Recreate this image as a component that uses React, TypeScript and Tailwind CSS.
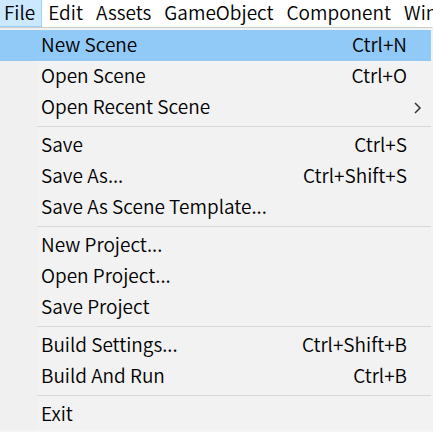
import { Fragment } from "react";

type Item = { label: string; shortcut?: string; submenu?: boolean; active?: boolean };

const menus = ["File", "Edit", "Assets", "GameObject", "Component", "Window"];

const groups: Item[][] = [
  [
    { label: "New Scene", shortcut: "Ctrl+N", active: true },
    { label: "Open Scene", shortcut: "Ctrl+O" },
    { label: "Open Recent Scene", submenu: true },
  ],
  [
    { label: "Save", shortcut: "Ctrl+S" },
    { label: "Save As...", shortcut: "Ctrl+Shift+S" },
    { label: "Save As Scene Template..." },
  ],
  [{ label: "New Project..." }, { label: "Open Project..." }, { label: "Save Project" }],
  [
    { label: "Build Settings...", shortcut: "Ctrl+Shift+B" },
    { label: "Build And Run", shortcut: "Ctrl+B" },
  ],
  [{ label: "Exit" }],
];

function MenuRow({ item }: { item: Item }) {
  return (
    <button
      type="button"
      role="menuitem"
      className={`flex h-[31px] w-full items-center justify-between pr-6 pb-[3px] pl-[41px] text-left whitespace-nowrap ${
        item.active ? "bg-[#91c9f7]" : ""
      }`}
    >
      <span>{item.label}</span>
      {item.shortcut && <span>{item.shortcut}</span>}
      {item.submenu && (
        <svg className="mt-1 -mr-[15px] h-3 w-2" viewBox="0 0 8 12" fill="none" stroke="#333" strokeWidth="1.5" aria-hidden="true">
          <path d="M1 1 L6 6 L1 11" />
        </svg>
      )}
    </button>
  );
}

export default function App() {
  return (
    <div className="min-h-screen overflow-x-clip bg-[#f2f2f2] font-['Noto_Sans_CJK_SC',sans-serif] text-[19px] leading-6 font-[350] text-black">
      <nav className="flex h-[27px] bg-white" aria-label="Main menu">
        {menus.map((menu, i) => (
          <button
            key={menu}
            type="button"
            className={`h-full shrink-0 border-r border-b pb-0.5 ${
              i === 0 ? "border-[#99d1ff] bg-[#cce8ff] pr-1.5 pl-1" : "border-transparent px-1.5"
            }`}
          >
            {menu}
          </button>
        ))}
      </nav>
      <div
        role="menu"
        aria-label="File"
        className="border-t border-r-2 border-b-2 border-t-[#cccccc] border-r-[#f2f2f2] border-b-[#f5f5f5] bg-linear-to-r from-[#f0f0f0] from-[37px] to-[#f2f2f2] to-[37px] pt-0.5"
      >
        {groups.map((group, i) => (
          <Fragment key={group[0].label}>
            {i > 0 && <hr className="my-[3px] ml-[37px] border-t border-[#d7d7d7]" />}
            {group.map((item) => (
              <MenuRow key={item.label} item={item} />
            ))}
          </Fragment>
        ))}
      </div>
    </div>
  );
}
